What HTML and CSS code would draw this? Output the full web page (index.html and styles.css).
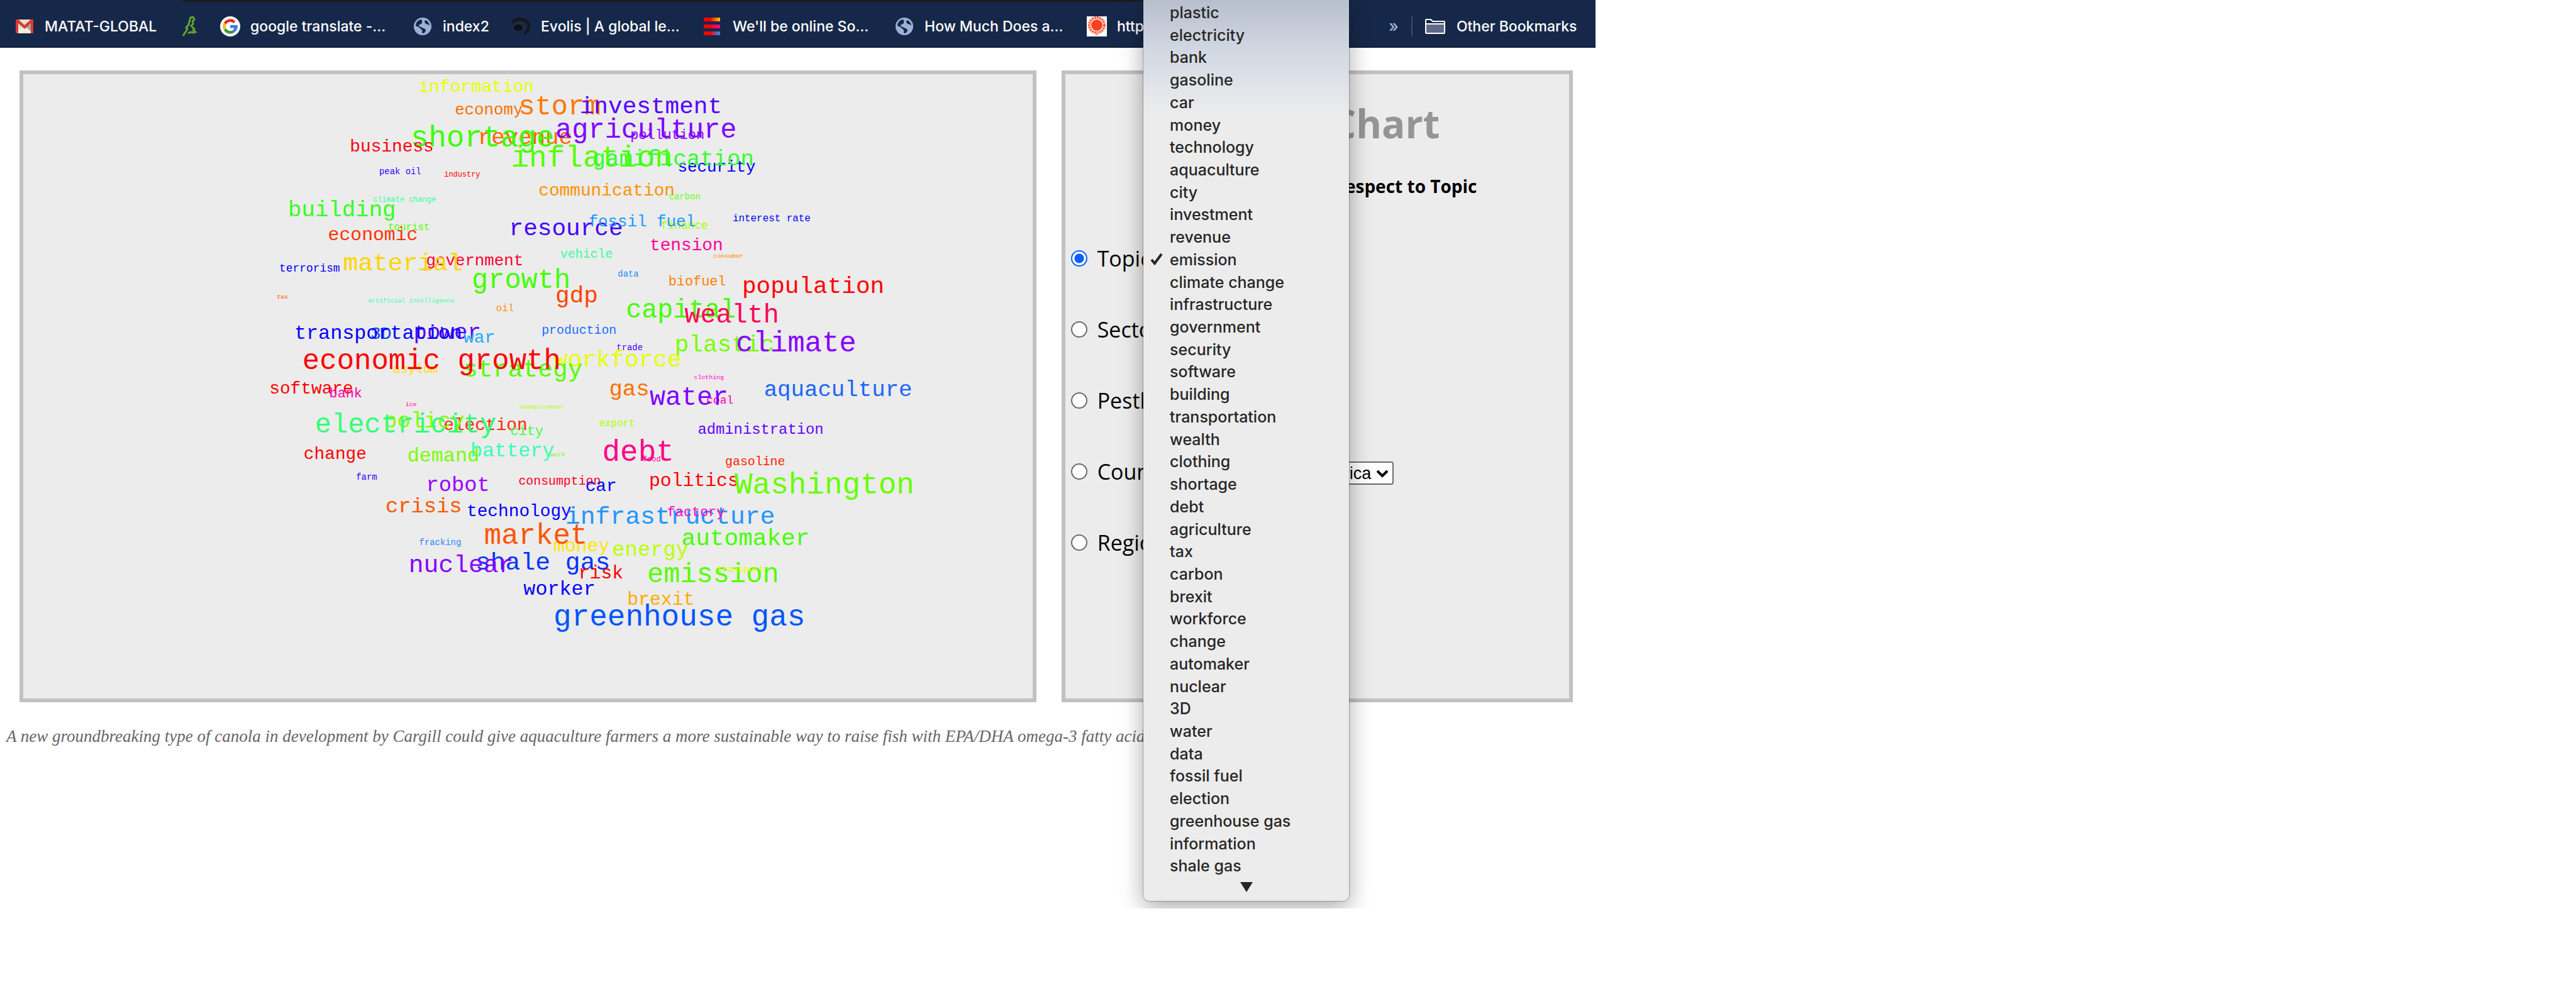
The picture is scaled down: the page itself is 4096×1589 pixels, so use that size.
FILE: index.html
```html
<!DOCTYPE html>
<html lang="en">
<head>
<meta charset="utf-8">
<title>Topic Chart</title>
<link rel="stylesheet" href="styles.css">
</head>
<body>
<div class="app">
  <nav class="bookmarks" aria-label="Bookmarks">
    <a class="bm bm-mail" href="#"><svg width="28" height="22" viewBox="0 0 28 22"><rect width="28" height="22" fill="#e3dfcf"/><path d="M0 22 14 9l14 13z" fill="#f1eee2"/><path d="M16 12 28 4v18z" fill="#a9a597"/><path d="M0 0h4l10 9 10-9h4v22h-4V6L14 15 4 6v16H0z" fill="#d93831"/></svg>MATAT-GLOBAL</a>
    <a class="bm bm-leaf" href="#" aria-label="Dancer"><svg width="24" height="32" viewBox="0 0 24 32"><path d="M2 31 6 25 9 20 7 18 11 13 12 8 14 2 18 1 20 5 17 8 18 12 15 15 20 20 18 22 22 25 18 26 14 25 10 27" fill="none" stroke="#63a52a" stroke-width="3"/></svg></a>
    <a class="bm bm-google" href="#"><svg width="32" height="32" viewBox="0 0 32 32"><circle cx="16" cy="16" r="16" fill="#fff"/><g fill="none" stroke-width="4.500"><path d="M22.700 9.300A9.500 9.500 0 0 0 7.800 11.300" stroke="#e32b24"/><path d="M7.800 11.300a9.500 9.500 0 0 0 0 9.400" stroke="#f7b90a"/><path d="M7.800 20.700a9.500 9.500 0 0 0 14 2.800" stroke="#34983f"/><path d="M16 16.200h9.500a9.500 9.500 0 0 1-3.700 7.300" stroke="#3b78f0"/></g></svg>google translate -...</a>
    <a class="bm bm-index" href="#"><svg width="28" height="28" viewBox="0 0 28 28"><use href="#globe"/></svg>index2</a>
    <a class="bm bm-evolis" href="#"><svg width="32" height="28" viewBox="0 0 32 28"><path d="M3 8C8-1 29 1 29 14c0 6-3 9-8 11" fill="none" stroke="#15171d" stroke-width="5"/><path d="M5 12c4-5 16-4 16 3 0 3-1 5-3 7" fill="none" stroke="#222a3a" stroke-width="3"/><ellipse cx="12" cy="16" rx="7" ry="5" fill="#0e1014"/></svg>Evolis | A global le...</a>
    <a class="bm bm-elementor" href="#"><svg width="26" height="28" viewBox="0 0 26 28"><defs><linearGradient id="ea"><stop offset=".4" stop-color="#f00"/><stop offset="1" stop-color="#fc0"/></linearGradient><linearGradient id="eb"><stop offset=".4" stop-color="#f00"/><stop offset="1" stop-color="#f0a"/></linearGradient><linearGradient id="ec"><stop offset=".4" stop-color="#f00"/><stop offset="1" stop-color="#2a8cff"/></linearGradient></defs><rect width="26" height="6" rx="1" fill="url(#ea)"/><rect y="11" width="26" height="6" rx="1" fill="url(#eb)"/><rect y="22" width="26" height="6" rx="1" fill="url(#ec)"/></svg>We'll be online So...</a>
    <a class="bm bm-much" href="#"><svg width="28" height="28" viewBox="0 0 28 28"><g id="globe"><circle cx="14" cy="14" r="14" fill="#9db0d6"/><path d="M12 3C6 4 3 8 3 13c2 2 5 1 6 3s3 2 4 4-1 4 1 5c3 0 5-3 5-5-1-3-4-3-6-4-1-2-5-1-5-4 1-2 5-1 5-4 0-2 1-3-1-5zM18 4c-2 3 0 4 1 6 2 1 4 0 6 3 0-4-3-8-7-9z" fill="#162849"/></g></svg>How Much Does a...</a>
    <a class="bm bm-http" href="#"><svg width="32" height="32" viewBox="0 0 32 32"><rect width="32" height="32" fill="#fff"/><circle cx="16" cy="14" r="12" fill="none" stroke="#f9603f" stroke-width="4" stroke-dasharray="3 1"/><circle cx="16" cy="14" r="9" fill="#f9411c"/><path d="M14 22h4v8h-4z" fill="#fb9a84"/></svg>http://</a>
    <span class="other">
      <button class="more" type="button" aria-label="More bookmarks">»</button>
      <a class="bm bm-other" href="#"><svg width="32" height="24" viewBox="0 0 32 24"><path d="M1 7V2q0-1 1-1h7l3 3h18q1 0 1 1v17q0 1-1 1H2q-1 0-1-1z" fill="#162849" stroke="#fff" stroke-width="2"/><path d="M2 9h28v13H2z" fill="#5f6b85"/><path d="M1 8h30" stroke="#fff" stroke-width="2"/></svg>Other Bookmarks</a>
    </span>
  </nav>

  <main class="panels">
    <section class="panel" aria-label="Word cloud">
      <svg class="cloud" viewBox="37 119 1616 1000">
        <text x="670" y="147" font-size="28" fill="#e6ff00">information</text>
        <text x="728" y="183" font-size="26" fill="#ff6f00">economy</text>
        <text x="830" y="183" font-size="44" fill="#ff7700">storm</text>
        <text x="928" y="181" font-size="38" fill="#5500ff">investment</text>
        <text x="765" y="231" font-size="36" fill="#ff6600">revenue</text>
        <text x="657" y="235" font-size="48" fill="#3cff00">shortage</text>
        <text x="560" y="243" font-size="28" fill="#ff0011">business</text>
        <text x="1009" y="223" font-size="22" fill="#8800ff">pollution</text>
        <text x="889" y="221" font-size="44" fill="#8000ff">agriculture</text>
        <text x="818" y="267" font-size="48" fill="#55ff00">inflation</text>
        <text x="1085" y="275" font-size="26" fill="#0000ff">security</text>
        <text x="948" y="265" font-size="36" fill="#33ff33">gamification</text>
        <text x="862" y="313" font-size="28" fill="#ff9100">communication</text>
        <text x="1071" y="319" font-size="14" fill="#66ff1a">carbon</text>
        <text x="607" y="279" font-size="14" fill="#3300ff">peak oil</text>
        <text x="711" y="283" font-size="12" fill="#ff0000">industry</text>
        <text x="597" y="323" font-size="12" fill="#33ff99">climate change</text>
        <text x="461" y="347" font-size="36" fill="#33ff22">building</text>
        <text x="621" y="369" font-size="16" fill="#55ff00">tourist</text>
        <text x="525" y="385" font-size="30" fill="#ff3300">economic</text>
        <text x="815" y="377" font-size="38" fill="#4400ff">resource</text>
        <text x="1058" y="367" font-size="18" fill="#aaff00">finance</text>
        <text x="942" y="363" font-size="26" fill="#1a99ff">fossil fuel</text>
        <text x="1173" y="355" font-size="16" fill="#0000ff">interest rate</text>
        <text x="1040" y="401" font-size="28" fill="#ff0099">tension</text>
        <text x="897" y="413" font-size="20" fill="#33ff99">vehicle</text>
        <text x="1142" y="413" font-size="10" fill="#ff8800">consumer</text>
        <text x="989" y="443" font-size="14" fill="#2288ff">data</text>
        <text x="1070" y="457" font-size="22" fill="#ff8000">biofuel</text>
        <text x="1188" y="469" font-size="38" fill="#ff0000">population</text>
        <text x="682" y="425" font-size="26" fill="#ff0033">government</text>
        <text x="549" y="433" font-size="40" fill="#ffd500">material</text>
        <text x="447" y="435" font-size="18" fill="#0000ff">terrorism</text>
        <text x="755" y="461" font-size="44" fill="#44ff00">growth</text>
        <text x="443" y="479" font-size="10" fill="#ff5500">tax</text>
        <text x="589" y="485" font-size="10" fill="#33ffaa">artificial intelligence</text>
        <text x="794" y="499" font-size="16" fill="#ff8c00">oil</text>
        <text x="889" y="485" font-size="38" fill="#ff4400">gdp</text>
        <text x="1002" y="509" font-size="42" fill="#44ff00">capital</text>
        <text x="1096" y="517" font-size="42" fill="#ff0055">wealth</text>
        <text x="867" y="535" font-size="20" fill="#1a6fff">production</text>
        <text x="987" y="561" font-size="14" fill="#4400ff">trade</text>
        <text x="1080" y="563" font-size="38" fill="#77ff00">plastic</text>
        <text x="1178" y="563" font-size="46" fill="#8800ff">climate</text>
        <text x="886" y="587" font-size="38" fill="#e6ff00">workforce</text>
        <text x="741" y="603" font-size="40" fill="#55ff00">strategy</text>
        <text x="629" y="597" font-size="20" fill="#ffe000">asylum</text>
        <text x="484" y="591" font-size="46" fill="#ff0000">economic growth</text>
        <text x="593" y="543" font-size="28" fill="#0044ff">3D</text>
        <text x="662" y="543" font-size="36" fill="#5500ff">power</text>
        <text x="471" y="543" font-size="32" fill="#0000ff">transportation</text>
        <text x="742" y="549" font-size="28" fill="#22aaff">war</text>
        <text x="431" y="631" font-size="28" fill="#ff0000">software</text>
        <text x="527" y="637" font-size="22" fill="#ff00aa">bank</text>
        <text x="649" y="651" font-size="10" fill="#ff00aa">ice</text>
        <text x="831" y="655" font-size="10" fill="#aaff00">unemployment</text>
        <text x="710" y="689" font-size="28" fill="#ff2a00">election</text>
        <text x="614" y="685" font-size="36" fill="#88ff00">policy</text>
        <text x="504" y="693" font-size="44" fill="#33ff77">electricity</text>
        <text x="817" y="697" font-size="22" fill="#44ff44">city</text>
        <text x="486" y="735" font-size="28" fill="#ff0000">change</text>
        <text x="753" y="731" font-size="32" fill="#33ffbb">battery</text>
        <text x="652" y="739" font-size="32" fill="#77ff00">demand</text>
        <text x="881" y="731" font-size="10" fill="#77ff00">work</text>
        <text x="570" y="769" font-size="14" fill="#2200ff">farm</text>
        <text x="1111" y="607" font-size="10" fill="#ff00cc">clothing</text>
        <text x="975" y="634" font-size="36" fill="#ff6f00">gas</text>
        <text x="1131" y="647" font-size="18" fill="#ff00aa">coal</text>
        <text x="1040" y="649" font-size="42" fill="#7f00ff">water</text>
        <text x="1223" y="635" font-size="36" fill="#1a66ff">aquaculture</text>
        <text x="959" y="683" font-size="16" fill="#aaff00">export</text>
        <text x="1117" y="695" font-size="24" fill="#6600ff">administration</text>
        <text x="964" y="738" font-size="48" fill="#ff0088">debt</text>
        <text x="1029" y="739" font-size="12" fill="#ff0099">food</text>
        <text x="1161" y="745" font-size="20" fill="#ff2200">gasoline</text>
        <text x="1039" y="779" font-size="30" fill="#ff0000">politics</text>
        <text x="1176" y="791" font-size="48" fill="#66ff00">Washington</text>
        <text x="682" y="787" font-size="34" fill="#9900ff">robot</text>
        <text x="830" y="777" font-size="20" fill="#ff0022">consumption</text>
        <text x="937" y="787" font-size="28" fill="#0000ff">car</text>
        <text x="617" y="821" font-size="34" fill="#ff5500">crisis</text>
        <text x="747" y="827" font-size="28" fill="#0000ff">technology</text>
        <text x="905" y="839" font-size="40" fill="#2294ff">infrastructure</text>
        <text x="1068" y="827" font-size="22" fill="#ff00bb">factory</text>
        <text x="886" y="883" font-size="30" fill="#ffe600">money</text>
        <text x="775" y="871" font-size="46" fill="#ff5500">market</text>
        <text x="1091" y="873" font-size="38" fill="#44ff00">automaker</text>
        <text x="980" y="890" font-size="34" fill="#bbff00">energy</text>
        <text x="671" y="873" font-size="14" fill="#2288ff">fracking</text>
        <text x="761" y="913" font-size="40" fill="#0033ff">shale gas</text>
        <text x="654" y="917" font-size="40" fill="#8800ff">nuclear</text>
        <text x="926" y="927" font-size="30" fill="#ff0000">risk</text>
        <text x="1036" y="933" font-size="44" fill="#55ff00">emission</text>
        <text x="1148" y="917" font-size="14" fill="#e6ff00">transport</text>
        <text x="838" y="953" font-size="32" fill="#0000ff">worker</text>
        <text x="1004" y="969" font-size="30" fill="#ffaa00">brexit</text>
        <text x="886" y="1002" font-size="48" fill="#0055ff">greenhouse gas</text>
      </svg>
    </section>

    <form class="panel chart-form">
      <h1>Chart</h1>
      <h2>respect to Topic</h2>
      <div class="field"><input type="radio" name="by" id="by-topic" checked><label for="by-topic">Topic</label></div>
      <div class="field"><input type="radio" name="by" id="by-sector"><label for="by-sector">Sector</label></div>
      <div class="field"><input type="radio" name="by" id="by-pestle"><label for="by-pestle">Pestle</label></div>
      <div class="field"><input type="radio" name="by" id="by-country"><label for="by-country">Country</label>
        <span class="country"><select aria-label="Country"><option>America</option></select><svg width="20" height="14" viewBox="0 0 20 14"><path d="m2 3 8 8 8-8" fill="none" stroke="#000" stroke-width="4"/></svg></span></div>
      <div class="field"><input type="radio" name="by" id="by-region"><label for="by-region">Region</label></div>
    </form>
  </main>

  <p class="news">A new groundbreaking type of canola in development by Cargill could give aquaculture farmers a more sustainable way to raise fish with EPA/DHA omega-3 fatty acids</p>

  <div class="menu">
    <ul role="listbox" aria-label="Topic">
      <li role="option">plastic</li>
      <li role="option">electricity</li>
      <li role="option">bank</li>
      <li role="option">gasoline</li>
      <li role="option">car</li>
      <li role="option">money</li>
      <li role="option">technology</li>
      <li role="option">aquaculture</li>
      <li role="option">city</li>
      <li role="option">investment</li>
      <li role="option">revenue</li>
      <li role="option" aria-selected="true"><svg class="tick" width="20" height="20" viewBox="0 0 20 20"><path d="m2 11 5 6L18 2" fill="none" stroke="#262626" stroke-width="4"/></svg>emission</li>
      <li role="option">climate change</li>
      <li role="option">infrastructure</li>
      <li role="option">government</li>
      <li role="option">security</li>
      <li role="option">software</li>
      <li role="option">building</li>
      <li role="option">transportation</li>
      <li role="option">wealth</li>
      <li role="option">clothing</li>
      <li role="option">shortage</li>
      <li role="option">debt</li>
      <li role="option">agriculture</li>
      <li role="option">tax</li>
      <li role="option">carbon</li>
      <li role="option">brexit</li>
      <li role="option">workforce</li>
      <li role="option">change</li>
      <li role="option">automaker</li>
      <li role="option">nuclear</li>
      <li role="option">3D</li>
      <li role="option">water</li>
      <li role="option">data</li>
      <li role="option">fossil fuel</li>
      <li role="option">election</li>
      <li role="option">greenhouse gas</li>
      <li role="option">information</li>
      <li role="option">shale gas</li>
    </ul>
    <svg class="down" width="20" height="16" viewBox="0 0 20 16"><path d="M0 0h20L10 16z" fill="#262626"/></svg>
  </div>
</div>
</body>
</html>
```
FILE: styles.css
```css
* { box-sizing: border-box; }

body {
  margin: 0;
  background: #fff;
  color: #000;
  font-family: "Open Sans", "Noto Sans", sans-serif;
}

.app {
  position: relative;
  width: 61.95%;
  padding-bottom: 254px;
  overflow: hidden;
}

/* bookmarks bar */
.bookmarks {
  display: flex;
  align-items: center;
  height: 76px;
  padding: 10px 30px 0 25px;
  border-bottom: 2px solid #101d38;
  background:
    linear-gradient(#1c1c1e, #1c1c1e) 290px 0 / 1540px 3px no-repeat,
    #162849;
}

.bm {
  display: flex;
  flex: none;
  align-items: center;
  gap: 18px;
  color: #fff;
  font: 500 23px/32px Inter, Roboto, sans-serif;
  text-decoration: none;
  white-space: nowrap;
}

.bm svg { flex: none; }
.bm-mail { width: 264px; }
.bm-leaf { width: 61px; }
.bm-google { width: 308px; gap: 16px; }
.bm-index { width: 154px; }
.bm-evolis { width: 307px; gap: 16px; }
.bm-elementor { width: 305px; gap: 20px; }
.bm-much { width: 304px; }
.bm-http { gap: 16px; }

.other {
  display: flex;
  align-items: center;
  gap: 20px;
  margin-left: auto;
}

.more {
  height: 32px;
  padding: 0 20px 0 0;
  border: 0;
  border-right: 2px solid #3d4c68;
  background: none;
  color: #9db0d6;
  font: 500 26px/28px Inter, sans-serif;
}

/* two panels */
.panels {
  display: grid;
  grid-template-columns: 1617fr 814fr;
  gap: 40px;
  padding: 36px 36px 0 31px;
}

.panel {
  border: 6px solid #c1c1c1;
  background: #ececec;
}

.cloud {
  display: block;
  width: 100%;
  font-family: "Liberation Mono", monospace;
}

.chart-form { padding: 38px 9px 0; }

h1, h2 {
  margin: 0;
  text-align: right;
}

h1 {
  padding-right: 197px;
  color: #959595;
  font-size: 62px;
  line-height: 80px;
}

h2 {
  padding: 40px 138px 38px 0;
  font-size: 28px;
  line-height: 40px;
}

.field {
  display: flex;
  align-items: center;
  height: 113px;
  font-size: 34px;
  line-height: 40px;
}

.field input {
  width: 26px;
  height: 26px;
  margin: 0 16px 0 0;
  border: 2px solid #6b6b6b;
  border-radius: 50%;
  background: #fff;
  appearance: none;
}

.field input:checked {
  border-color: #0b5fff;
  background: radial-gradient(circle, #0b5fff 7px, #fff 8px);
}

.country {
  display: flex;
  align-items: center;
  width: 331px;
  margin: 6px 0 0 14px;
}

.country select {
  width: 100%;
  height: 37px;
  padding: 0 34px 0 8px;
  border: 2px solid #6b6b6b;
  border-radius: 4px;
  background: #fff;
  color: #000;
  font: 27px/32px "Liberation Sans", sans-serif;
  text-align-last: right;
  appearance: none;
}

.country svg {
  flex: none;
  margin-left: -28px;
}

.news {
  margin: 0;
  padding: 34px 0 0 10px;
  color: #666;
  font: italic 27px/40px "Liberation Serif", serif;
  white-space: nowrap;
}

/* open topic menu, over the page */
.menu {
  position: absolute;
  top: 0;
  left: 71.65%;
  width: 327px;
  height: 1433px;
  padding-top: 3px;
  border-radius: 0 0 10px 10px;
  background: linear-gradient(#b7bfcd, #d2d8e2 80px, #ececec 180px);
  box-shadow: 0 0 0 1px rgba(0, 0, 0, .25), 0 10px 36px rgba(0, 0, 0, .35);
}

.menu ul {
  display: grid;
  grid-auto-rows: 1fr;
  height: 1393px;
  margin: 0;
  padding: 0 0 0 42px;
  color: #262626;
  font: 500 25px/34px Inter, Roboto, sans-serif;
  list-style: none;
}

.tick {
  margin: 0 11px 0 -31px;
}

.down {
  display: block;
  margin: 7px auto 0;
}
```
